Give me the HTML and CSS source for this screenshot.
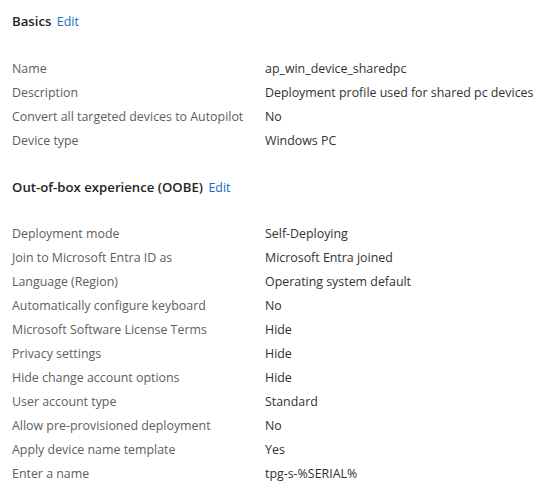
FILE: index.html
```html
<!DOCTYPE html>
<html>
<head>
<meta charset="utf-8">
<link rel="stylesheet" href="styles.css">
</head>
<body>
<div class="page">
  <section class="section">
    <h2 class="heading">Basics <a class="edit">Edit</a></h2>
    <div class="rows">
      <div class="label">Name</div><div class="value">ap_win_device_sharedpc</div>
      <div class="label">Description</div><div class="value">Deployment profile used for shared pc devices</div>
      <div class="label">Convert all targeted devices to Autopilot</div><div class="value">No</div>
      <div class="label">Device type</div><div class="value">Windows PC</div>
    </div>
  </section>
  <section class="section">
    <h2 class="heading">Out-of-box experience (OOBE) <a class="edit">Edit</a></h2>
    <div class="rows">
      <div class="label">Deployment mode</div><div class="value">Self-Deploying</div>
      <div class="label">Join to Microsoft Entra ID as</div><div class="value">Microsoft Entra joined</div>
      <div class="label">Language (Region)</div><div class="value">Operating system default</div>
      <div class="label">Automatically configure keyboard</div><div class="value">No</div>
      <div class="label">Microsoft Software License Terms</div><div class="value">Hide</div>
      <div class="label">Privacy settings</div><div class="value">Hide</div>
      <div class="label">Hide change account options</div><div class="value">Hide</div>
      <div class="label">User account type</div><div class="value">Standard</div>
      <div class="label">Allow pre-provisioned deployment</div><div class="value">No</div>
      <div class="label">Apply device name template</div><div class="value">Yes</div>
      <div class="label">Enter a name</div><div class="value">tpg-s-%SERIAL%</div>
    </div>
  </section>
</div>
</body>
</html>
```
FILE: styles.css
```css
html, body {
  margin: 0;
  padding: 0;
  background: #ffffff;
}
body {
  font-family: "Open Sans", "Noto Sans", sans-serif;
  font-size: 12.4px;
  color: #323130;
}
.page {
  padding: 11px 12px 0 12px;
}
.section + .section {
  margin-top: 25px;
}
.heading {
  margin: 0 0 24px 0;
  font-size: 13.2px;
  font-weight: 600;
  line-height: 20px;
  color: #242424;
}
.section + .section .heading {
  margin-bottom: 23px;
}
.edit {
  font-weight: 400;
  font-size: 12.4px;
  color: #0f6cbd;
  margin-left: 2px;
}
.rows {
  display: grid;
  grid-template-columns: 253px 1fr;
  grid-auto-rows: 24px;
  align-items: center;
}
.label {
  color: #605e5c;
  white-space: nowrap;
}
.value {
  color: #323130;
  white-space: nowrap;
}
```
